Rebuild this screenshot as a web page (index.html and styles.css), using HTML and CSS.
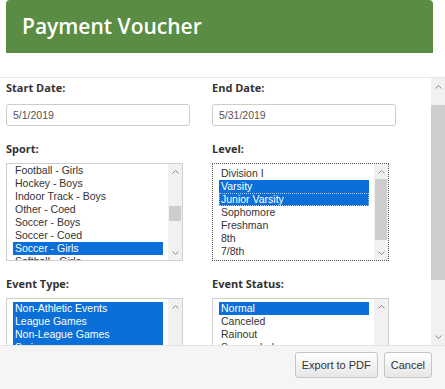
FILE: index.html
```html
<!DOCTYPE html>
<html>
<head>
  <title>Payment Voucher</title>
  <link rel="stylesheet" href="styles.css">
</head>
<body>

  <div class="modal-header">
    <h1>Payment Voucher</h1>
  </div>

  <div class="modal-body">
    <div class="form">

      <div class="field">
        <label for="start">Start Date:</label>
        <input type="text" id="start" class="text-input" value="5/1/2019">
      </div>
      <div class="field">
        <label for="end">End Date:</label>
        <input type="text" id="end" class="text-input" value="5/31/2019">
      </div>

      <div class="field">
        <label>Sport:</label>
        <div class="listbox">
          <ul class="options scrolled">
            <li>Football - Girls</li>
            <li>Hockey - Boys</li>
            <li>Indoor Track - Boys</li>
            <li>Other - Coed</li>
            <li>Soccer - Boys</li>
            <li>Soccer - Coed</li>
            <li class="selected">Soccer - Girls</li>
            <li>Softball - Girls</li>
          </ul>
          <div class="list-scroll">
            <span class="arrow"><svg width="7" height="4" viewBox="0 0 7 4"><polyline points="0.5,3.5 3.5,0.5 6.5,3.5" /></svg></span>
            <div class="track"><div class="thumb" style="margin-top: 27px; height: 15px;"></div></div>
            <span class="arrow"><svg width="7" height="4" viewBox="0 0 7 4"><polyline points="0.5,0.5 3.5,3.5 6.5,0.5" /></svg></span>
          </div>
        </div>
      </div>
      <div class="field">
        <label>Level:</label>
        <div class="listbox focused">
          <ul class="options">
            <li>Division I</li>
            <li class="selected">Varsity</li>
            <li class="selected current">Junior Varsity</li>
            <li>Sophomore</li>
            <li>Freshman</li>
            <li>8th</li>
            <li>7/8th</li>
            <li>7th</li>
          </ul>
          <div class="list-scroll">
            <span class="arrow"><svg width="7" height="4" viewBox="0 0 7 4"><polyline points="0.5,3.5 3.5,0.5 6.5,3.5" /></svg></span>
            <div class="track"><div class="thumb" style="margin-top: 0px; height: 61px;"></div></div>
            <span class="arrow"><svg width="7" height="4" viewBox="0 0 7 4"><polyline points="0.5,0.5 3.5,3.5 6.5,0.5" /></svg></span>
          </div>
        </div>
      </div>

      <div class="field">
        <label>Event Type:</label>
        <div class="listbox">
          <ul class="options">
            <li class="selected">Non-Athletic Events</li>
            <li class="selected">League Games</li>
            <li class="selected">Non-League Games</li>
            <li class="selected">Scrimmages</li>
          </ul>
          <div class="list-scroll">
            <span class="arrow"><svg width="7" height="4" viewBox="0 0 7 4"><polyline points="0.5,3.5 3.5,0.5 6.5,3.5" /></svg></span>
            <div class="track"><div class="thumb" style="margin-top: 50px; height: 20px;"></div></div>
            <span class="arrow"><svg width="7" height="4" viewBox="0 0 7 4"><polyline points="0.5,0.5 3.5,3.5 6.5,0.5" /></svg></span>
          </div>
        </div>
      </div>
      <div class="field">
        <label>Event Status:</label>
        <div class="listbox">
          <ul class="options">
            <li class="selected">Normal</li>
            <li>Canceled</li>
            <li>Rainout</li>
            <li>Suspended</li>
          </ul>
          <div class="list-scroll">
            <span class="arrow"><svg width="7" height="4" viewBox="0 0 7 4"><polyline points="0.5,3.5 3.5,0.5 6.5,3.5" /></svg></span>
            <div class="track"><div class="thumb" style="margin-top: 50px; height: 20px;"></div></div>
            <span class="arrow"><svg width="7" height="4" viewBox="0 0 7 4"><polyline points="0.5,0.5 3.5,3.5 6.5,0.5" /></svg></span>
          </div>
        </div>
      </div>

    </div>

    <div class="page-scroll">
      <span class="arrow"><svg width="7" height="4" viewBox="0 0 7 4"><polyline points="0.5,3.5 3.5,0.5 6.5,3.5" /></svg></span>
      <div class="track"><div class="thumb" style="margin-top: 10px; height: 175px;"></div></div>
      <span class="arrow"><svg width="7" height="4" viewBox="0 0 7 4"><polyline points="0.5,0.5 3.5,3.5 6.5,0.5" /></svg></span>
    </div>
  </div>

  <div class="modal-footer">
    <button type="button" class="btn">Export to PDF</button>
    <button type="button" class="btn">Cancel</button>
  </div>

</body>
</html>
```

FILE: styles.css
```css
body {
  margin: 0;
  padding: 0;
  background-color: #ffffff;
  font-family: "Open Sans", "Liberation Sans", sans-serif;
  color: #333333;
  width: 445px;
  height: 389px;
  overflow: hidden;
}

.modal-header {
  margin: 0 12px 0 6px;
  height: 53px;
  background-color: #5a8c43;
  border-radius: 4px 4px 0 0;
  display: flex;
  align-items: center;
}

.modal-header h1 {
  margin: 0;
  padding-left: 16px;
  font-size: 21px;
  font-weight: 600;
  line-height: 29px;
  color: #ffffff;
}

.modal-body {
  margin-top: 24px;
  height: 267px;
  border-top: 1px solid #e6e6e6;
  display: flex;
  overflow: hidden;
}

.form {
  flex: 1;
  display: grid;
  grid-template-columns: 184px 184px;
  column-gap: 22px;
  row-gap: 15px;
  align-content: start;
  padding: 2px 0 0 6px;
  overflow: hidden;
}

.field label {
  display: block;
  font-size: 11px;
  font-weight: 700;
  line-height: 15px;
  margin-bottom: 7px;
  color: #333333;
}

.text-input {
  box-sizing: border-box;
  width: 184px;
  height: 22px;
  margin: 0;
  padding: 0 6px;
  border: 1px solid #cccccc;
  border-radius: 3px;
  font-family: "Liberation Sans", Arial, sans-serif;
  font-size: 10.5px;
  color: #555555;
}

.listbox {
  box-sizing: border-box;
  width: 177px;
  height: 98px;
  border: 1px solid #cfcfcf;
  display: flex;
  margin-top: 1px;
}

.listbox.focused {
  border: 1px dotted #555555;
}

.options {
  flex: 1;
  list-style: none;
  margin: 0;
  padding: 3px 5px 0 6px;
  overflow: hidden;
  font-family: "Liberation Sans", Arial, sans-serif;
  font-size: 10.5px;
  line-height: 13px;
  color: #333333;
}

.options.scrolled {
  padding-top: 0;
}

.options li {
  padding-left: 2px;
  white-space: nowrap;
  height: 13px;
}

.options li.selected {
  background-color: #0a6fd8;
  color: #ffffff;
}

.options li.current {
  outline: 1px dotted #a9c8ee;
  outline-offset: -1px;
}

.list-scroll,
.page-scroll {
  width: 14px;
  background-color: #f1f1f1;
  display: flex;
  flex-direction: column;
}

.list-scroll .arrow,
.page-scroll .arrow {
  height: 15px;
  display: flex;
  align-items: center;
  justify-content: center;
}

.page-scroll .arrow {
  height: 17px;
}

.arrow svg polyline {
  fill: none;
  stroke: #8a8a8a;
  stroke-width: 1;
}

.track {
  flex: 1;
  overflow: hidden;
}

.thumb {
  background-color: #cdcdcd;
  margin: 0 1px;
}

.page-scroll .thumb {
  margin-left: 0;
  margin-right: 0;
}

.modal-footer {
  height: 44px;
  box-sizing: border-box;
  border-top: 1px solid #e3e3e3;
  background-color: #f5f5f5;
  display: flex;
  justify-content: flex-end;
  align-items: flex-start;
  gap: 6px;
  padding: 6px 13px 0 0;
}

.btn {
  height: 26px;
  margin: 0;
  padding: 0 6px;
  border: 1px solid #c4c4c4;
  border-radius: 3px;
  background: linear-gradient(#ffffff, #e6e6e6);
  font-family: "Liberation Sans", Arial, sans-serif;
  font-size: 11px;
  color: #333333;
  cursor: pointer;
}
```
